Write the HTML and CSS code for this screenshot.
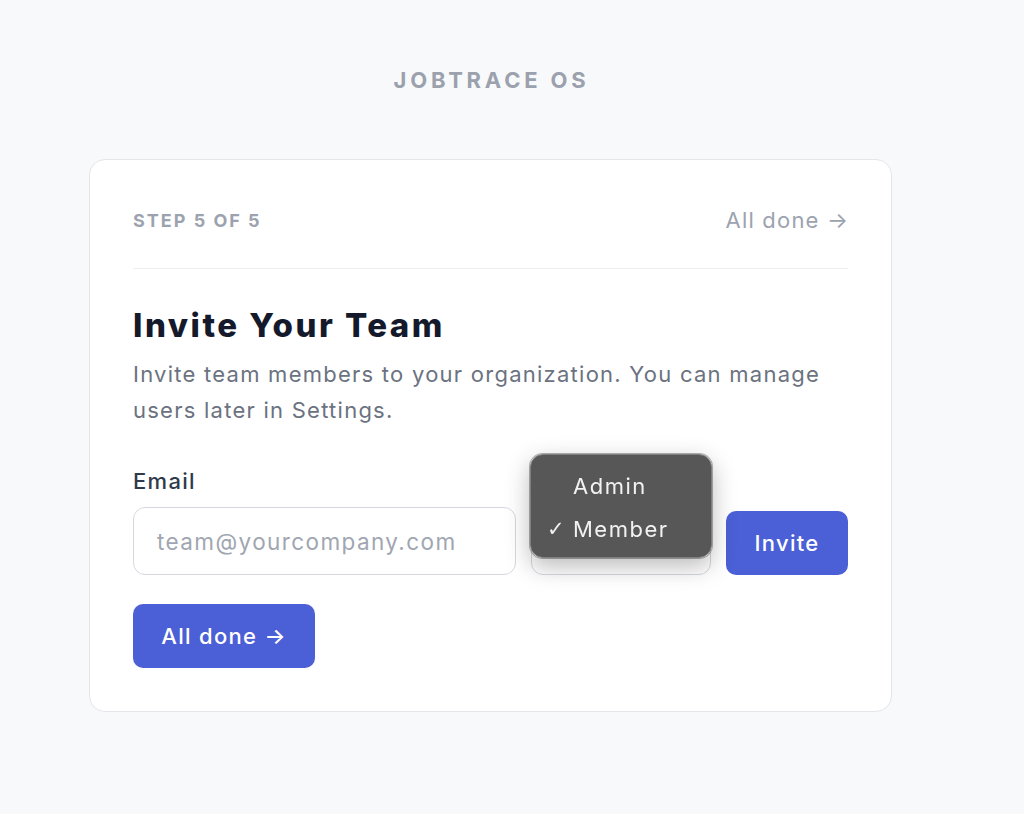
FILE: index.html
```html
<!DOCTYPE html>
<html>
<head>
<meta charset="utf-8">
<link rel="stylesheet" href="styles.css">
</head>
<body>
<div class="page">
  <div class="brand">JOBTRACE OS</div>
  <div class="card">
    <div class="card-head">
      <span class="step">STEP 5 OF 5</span>
      <a class="skip">All done →</a>
    </div>
    <h1 class="title">Invite Your Team</h1>
    <p class="desc">Invite team members to your organization. You can manage users later in Settings.</p>
    <div class="form-row">
      <div class="field email-field">
        <label class="label">Email</label>
        <div class="input">team@yourcompany.com</div>
      </div>
      <div class="field role-field">
        <div class="label-space"></div>
        <div class="select"></div>
        <div class="menu">
          <div class="menu-item"><span class="check"></span>Admin</div>
          <div class="menu-item"><span class="check">✓</span>Member</div>
        </div>
      </div>
      <button class="btn invite">Invite</button>
    </div>
    <button class="btn done">All done →</button>
  </div>
</div>
</body>
</html>
```
FILE: styles.css
```css
* { box-sizing: border-box; }
html, body { margin: 0; padding: 0; }
body {
  background: #f8f9fb;
  font-family: "Inter", "Liberation Sans", sans-serif;
  letter-spacing: 1.3px;
  width: 1024px;
  height: 814px;
  overflow: hidden;
}
.page {
  padding: 66px 0 0 89px;
}
.brand {
  width: 803px;
  text-align: center;
  font-size: 22px;
  font-weight: 700;
  letter-spacing: 3.8px;
  padding-left: 2px;
  color: #9ba1ad;
  line-height: 28px;
}
.card {
  margin-top: 65px;
  width: 803px;
  height: 553px;
  background: #ffffff;
  border: 1px solid #e4e6ea;
  border-radius: 16px;
  padding: 40px 43px 0 43px;
}
.card-head {
  display: flex;
  justify-content: space-between;
  align-items: center;
  height: 40px;
  border-bottom: 1px solid #eceef1;
  box-sizing: content-box;
  padding-bottom: 28px;
}
.step {
  font-size: 18px;
  font-weight: 700;
  letter-spacing: 2px;
  color: #9ca3af;
}
.skip {
  font-size: 22px;
  color: #9ca3af;
  letter-spacing: 1.2px;
  margin-right: -1.2px;
}
.title {
  margin: 36px 0 0 0;
  font-size: 33px;
  font-weight: 800;
  color: #141a2b;
  line-height: 40px;
  letter-spacing: 2.5px;
}
.desc {
  margin: 11px 0 0 0;
  font-size: 22px;
  line-height: 36px;
  color: #6b7280;
  letter-spacing: 1.25px;
  width: 715px;
}
.form-row {
  margin-top: 39px;
  display: flex;
  align-items: flex-end;
  gap: 15px;
}
.field {
  display: flex;
  flex-direction: column;
}
.email-field { width: 383px; }
.role-field { width: 180px; position: relative; }
.label {
  font-size: 22px;
  font-weight: 500;
  color: #2f3a4d;
  line-height: 28px;
  margin-bottom: 12px;
}
.label-space {
  height: 28px;
  margin-bottom: 12px;
}
.input {
  height: 68px;
  border: 1.5px solid #d5d9df;
  border-radius: 12px;
  padding: 0 23px;
  display: flex;
  align-items: center;
  font-size: 22.5px;
  letter-spacing: 1.4px;
  color: #a0a6b1;
}
.select {
  height: 68px;
  border: 1.5px solid #d5d9df;
  border-radius: 12px;
}
.menu {
  position: absolute;
  left: -1px;
  top: -13px;
  width: 182px;
  height: 104px;
  border-radius: 13px;
  background: rgba(74, 74, 74, 0.93);
  backdrop-filter: blur(3px);
  border: 1px solid #7f7f7f;
  box-shadow: 0 0 0 1px rgba(0,0,0,0.3), 0 8px 24px rgba(0,0,0,0.28);
  padding: 9px 0 0 0;
}
.menu-item {
  display: flex;
  align-items: center;
  height: 43px;
  font-size: 22px;
  letter-spacing: 1.5px;
  color: #f2f2f2;
  padding-left: 16px;
}
.check {
  width: 26px;
  display: inline-block;
  font-family: "DejaVu Sans", sans-serif;
  font-size: 21px;
  letter-spacing: 0;
}
.btn {
  border: none;
  background: #4b5fd6;
  color: #ffffff;
  font-family: inherit;
  font-size: 22px;
  font-weight: 500;
  letter-spacing: 1.3px;
  border-radius: 10px;
  height: 64px;
}
.invite {
  width: 122px;
}
.done {
  margin-top: 29px;
  width: 182px;
}
```
